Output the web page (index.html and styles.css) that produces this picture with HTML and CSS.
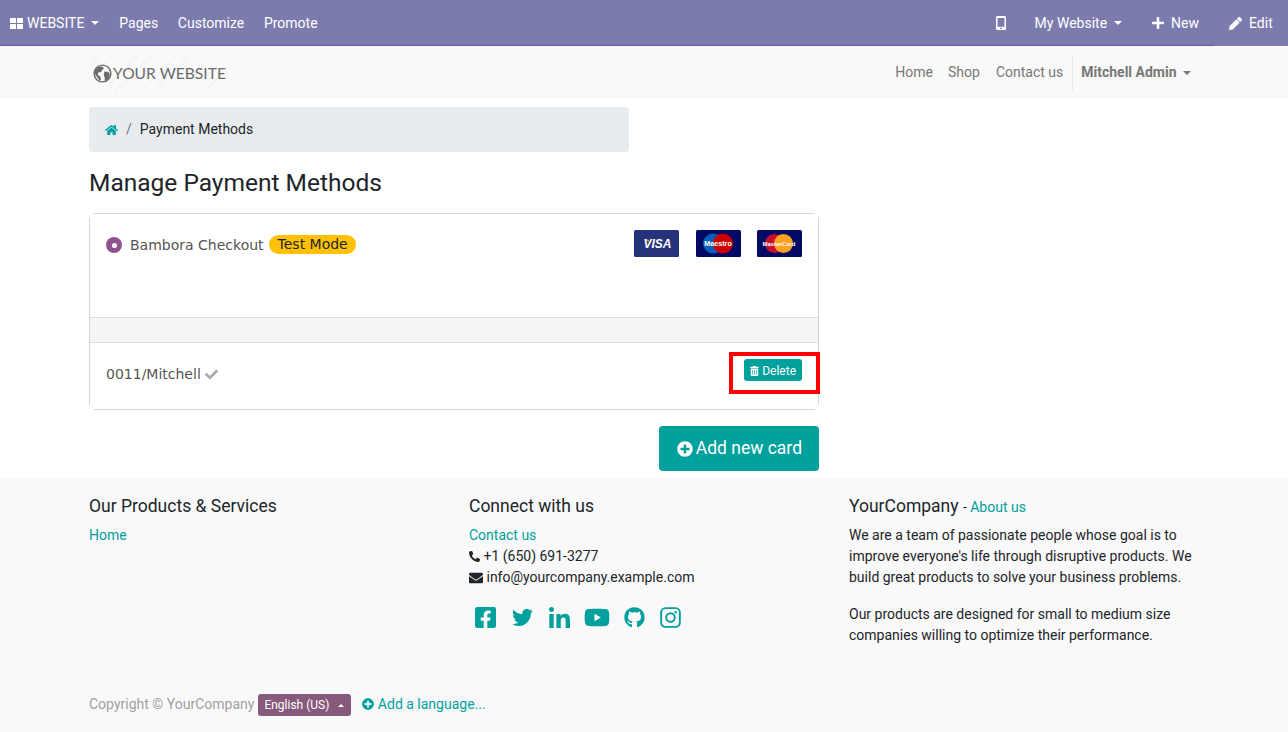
FILE: index.html
```html
<!DOCTYPE html>
<html lang="en">

<head>
    <meta charset="UTF-8">
    <meta name="viewport" content="width=device-width, initial-scale=1.0">
    <title>Manage Payment Methods</title>
    <link rel="stylesheet" href="styles.css">
</head>

<body>
    <nav class="adminbar">
        <div class="adminbar-left">
            <a class="admin-link admin-brand">
                <svg class="ico ico-th" viewBox="0 0 13 11"><rect x="0" y="0" width="6" height="5" rx="0.6"/><rect x="7" y="0" width="6" height="5" rx="0.6"/><rect x="0" y="6" width="6" height="5" rx="0.6"/><rect x="7" y="6" width="6" height="5" rx="0.6"/></svg>
                <span>WEBSITE</span><span class="caret"></span>
            </a>
            <a class="admin-link">Pages</a>
            <a class="admin-link admin-tight">Customize</a>
            <a class="admin-link admin-tight">Promote</a>
        </div>
        <div class="adminbar-right">
            <a class="admin-link admin-mobile">
                <svg class="ico ico-mobile" viewBox="0 0 10 14"><path fill-rule="evenodd" d="M1.6 0h6.8C9.3 0 10 .7 10 1.6v10.8c0 .9-.7 1.6-1.6 1.6H1.6C.7 14 0 13.300 0 12.400V1.600C0 .7.7 0 1.600 0zM1.500 2v8.800h7V2zM5 11.400a.9.9 0 1 0 0 1.800.9.9 0 0 0 0-1.800z"/></svg>
            </a>
            <a class="admin-link admin-site"><span>My Website</span><span class="caret"></span></a>
            <a class="admin-link admin-new">
                <svg class="ico ico-plus" viewBox="0 0 448 512"><path d="M416 208H272V64c0-17.670-14.330-32-32-32h-32c-17.670 0-32 14.330-32 32v144H32c-17.670 0-32 14.330-32 32v32c0 17.670 14.330 32 32 32h144v144c0 17.670 14.330 32 32 32h32c17.670 0 32-14.330 32-32V304h144c17.670 0 32-14.330 32-32v-32c0-17.670-14.330-32-32-32z"/></svg>
                <span>New</span>
            </a>
            <a class="admin-link admin-edit">
                <svg class="ico ico-pencil" viewBox="0 0 512 512"><path d="M497.900 142.100l-46.100 46.100c-4.700 4.700-12.300 4.700-17 0l-111-111c-4.700-4.700-4.700-12.300 0-17l46.100-46.100c18.700-18.700 49.100-18.700 67.900 0l60.100 60.100c18.800 18.700 18.800 49.100 0 67.900zM284.200 99.800L21.600 362.400.4 483.900c-2.900 16.400 11.400 30.600 27.800 27.800l121.500-21.300 262.600-262.600c4.700-4.700 4.700-12.300 0-17l-111-111c-4.800-4.700-12.400-4.700-17.100 0z"/></svg>
                <span>Edit</span>
            </a>
        </div>
    </nav>

    <header class="sitebar">
        <div class="container sitebar-inner">
            <a class="logo">
                <svg class="logo-globe" viewBox="0 0 20 20">
                    <circle cx="10" cy="10" r="8.800" fill="none" stroke="#6b6b6b" stroke-width="1.500"/>
                    <path fill="#6b6b6b" d="M6 2.500l4 .5 1.500 1.500-2 2-1 2-3 .5-.5 2.500 2.500 1.500 1 3-1.500 1.500-2-3-2.500-3-1-3 2-3.500zM12 8l4 .5 1.800 2-1 4-3 3.500-1.500-.5v-3.500l-1-2.500z"/>
                </svg>
                <span class="logo-text">YOUR WEBSITE</span>
            </a>
            <ul class="sitenav">
                <li class="sitenav-home"><a>Home</a></li>
                <li><a>Shop</a></li>
                <li class="sitenav-contact"><a>Contact us</a></li>
                <li class="sitenav-user"><a>Mitchell Admin <span class="caret"></span></a></li>
            </ul>
        </div>
    </header>

    <main class="container content">
        <div class="breadcrumb">
            <svg class="ico ico-home" viewBox="0 0 576 512"><path d="M280.370 148.260L96 300.110V464a16 16 0 0 0 16 16l112.060-.29a16 16 0 0 0 15.920-16V368a16 16 0 0 1 16-16h64a16 16 0 0 1 16 16v95.640a16 16 0 0 0 16 16.050L464 480a16 16 0 0 0 16-16V300L295.670 148.260a12.190 12.190 0 0 0-15.300 0zM571.600 251.470L488 182.560V44.050a12 12 0 0 0-12-12h-56a12 12 0 0 0-12 12v72.610L318.470 43a48 48 0 0 0-61 0L4.340 251.470a12 12 0 0 0-1.600 16.900l25.500 31A12 12 0 0 0 45.150 301l235.220-193.740a12.190 12.190 0 0 1 15.300 0L530.900 301a12 12 0 0 0 16.900-1.600l25.500-31a12 12 0 0 0-1.700-16.930z"/></svg>
            <span class="crumb-sep">/</span>
            <span>Payment Methods</span>
        </div>

        <h3 class="page-title">Manage Payment Methods</h3>

        <div class="pay-card">
            <div class="pay-row">
                <div class="pay-label">
                    <span class="radio"></span>
                    <span class="pay-name">Bambora Checkout</span>
                    <span class="badge-test">Test Mode</span>
                </div>
                <div class="pay-logos">
                    <svg class="cc cc-first" viewBox="0 0 45 27">
                        <rect width="45" height="27" rx="1.500" fill="#26337a"/>
                        <path d="M9.500 9.500c2.500.3 5 1.500 6.500 4-.800-2.500-1.200-3.600-2-4z" fill="#f4a428"/>
                        <text x="23.500" y="18" class="cc-visa">VISA</text>
                    </svg>
                    <svg class="cc" viewBox="0 0 45 27">
                        <rect width="45" height="27" rx="1.500" fill="#000a64"/>
                        <circle cx="17" cy="13.500" r="10" fill="#0a5fb8"/>
                        <circle cx="27" cy="13.500" r="10" fill="#cc0000"/>
                        <text x="22" y="15.800" class="cc-name">Maestro</text>
                    </svg>
                    <svg class="cc" viewBox="0 0 45 27">
                        <rect width="45" height="27" rx="1.500" fill="#000a64"/>
                        <circle cx="17.500" cy="13.500" r="9.500" fill="#c8102e"/>
                        <circle cx="26.500" cy="13.500" r="9.500" fill="#ffa020"/>
                        <text x="22" y="15.800" class="cc-name cc-master">MasterCard</text>
                    </svg>
                </div>
            </div>
            <div class="pay-spacer"></div>
            <div class="pay-token">
                <div class="token-name">
                    0011/Mitchell
                    <svg class="ico ico-check" viewBox="0 0 512 512"><path d="M173.898 439.404l-166.400-166.400c-9.997-9.997-9.997-26.206 0-36.204l36.203-36.204c9.997-9.998 26.207-9.998 36.204 0L192 312.690 432.095 72.596c9.997-9.997 26.207-9.997 36.204 0l36.203 36.204c9.997 9.997 9.997 26.206 0 36.204l-294.400 294.401c-9.998 9.997-26.207 9.997-36.204-.001z"/></svg>
                </div>
                <a class="btn-delete">
                    <svg class="ico ico-trash" viewBox="0 0 448 512"><path d="M32 464a48 48 0 0 0 48 48h288a48 48 0 0 0 48-48V128H32zm272-256a16 16 0 0 1 32 0v224a16 16 0 0 1-32 0zm-96 0a16 16 0 0 1 32 0v224a16 16 0 0 1-32 0zm-96 0a16 16 0 0 1 32 0v224a16 16 0 0 1-32 0zM432 32H312l-9.400-18.700A24 24 0 0 0 281.100 0H166.800a23.720 23.720 0 0 0-21.400 13.300L136 32H16A16 16 0 0 0 0 48v32a16 16 0 0 0 16 16h416a16 16 0 0 0 16-16V48a16 16 0 0 0-16-16z"/></svg>
                    <span>Delete</span>
                </a>
                <span class="highlight-box"></span>
            </div>
        </div>

        <div class="add-wrap">
            <a class="btn-add">
                <svg class="ico ico-addcircle" viewBox="0 0 512 512"><path d="M256 8C119 8 8 119 8 256s111 248 248 248 248-111 248-248S393 8 256 8zm144 276c0 6.600-5.400 12-12 12h-92v92c0 6.600-5.400 12-12 12h-56c-6.600 0-12-5.400-12-12v-92h-92c-6.600 0-12-5.400-12-12v-56c0-6.600 5.400-12 12-12h92v-92c0-6.600 5.400-12 12-12h56c6.600 0 12 5.400 12 12v92h92c6.600 0 12 5.400 12 12v56z"/></svg>
                <span>Add new card</span>
            </a>
        </div>
    </main>

    <footer class="footer">
        <div class="container">
            <div class="footer-cols">
                <div class="footer-col">
                    <h5 class="footer-title">Our Products &amp; Services</h5>
                    <a class="link">Home</a>
                </div>
                <div class="footer-col">
                    <h5 class="footer-title">Connect with us</h5>
                    <div class="footer-line"><a class="link">Contact us</a></div>
                    <div class="footer-line">
                        <svg class="ico ico-phone" viewBox="0 0 512 512"><path d="M493.400 24.600l-104-24c-11.300-2.600-22.900 3.300-27.500 13.900l-48 112c-4.200 9.800-1.400 21.300 6.900 28l60.600 49.600c-36 76.700-98.900 140.500-177.200 177.200l-49.600-60.600c-6.800-8.300-18.200-11.100-28-6.900l-112 48C3.900 366.500-2 378.100.6 389.400l24 104C27.100 504.200 36.700 512 48 512c256.100 0 464-207.500 464-464 0-11.200-7.700-20.900-18.600-23.400z"/></svg>
                        +1 (650) 691-3277
                    </div>
                    <div class="footer-line">
                        <svg class="ico ico-mail" viewBox="0 0 512 512"><path d="M502.300 190.800c3.900-3.100 9.700-.2 9.700 4.700V400c0 26.500-21.500 48-48 48H48c-26.500 0-48-21.500-48-48V195.600c0-5 5.700-7.800 9.700-4.700 22.400 17.400 52.100 39.500 154.100 113.600 21.100 15.400 56.700 47.800 92.200 47.600 35.700.3 72-32.800 92.300-47.600 102-74.100 131.600-96.300 154-113.700zM256 320c23.200.4 56.600-29.200 73.400-41.400 132.700-96.300 142.800-104.700 173.400-128.700 5.800-4.500 9.200-11.500 9.200-18.900v-19c0-26.500-21.500-48-48-48H48C21.500 64 0 85.500 0 112v19c0 7.400 3.400 14.300 9.200 18.900 30.600 23.900 40.700 32.400 173.400 128.700 16.800 12.200 50.200 41.800 73.400 41.400z"/></svg>
                        info@yourcompany.example.com
                    </div>
                    <div class="social">
                        <svg class="social-ico" viewBox="0 32 448 448"><path d="M400 32H48A48 48 0 0 0 0 80v352a48 48 0 0 0 48 48h137.250V327.690h-63V256h63v-54.640c0-62.150 37-96.480 93.670-96.480 27.140 0 55.520 4.840 55.520 4.840v61h-31.270c-30.810 0-40.420 19.120-40.420 38.730V256h68.780l-11 71.690h-57.780V480H400a48 48 0 0 0 48-48V80a48 48 0 0 0-48-48z"/></svg>
                        <svg class="social-ico" viewBox="0 0 512 512"><path d="M459.370 151.716c.325 4.548.325 9.097.325 13.645 0 138.720-105.583 298.558-298.558 298.558-59.452 0-114.680-17.219-161.137-47.106 8.447.974 16.568 1.299 25.340 1.299 49.055 0 94.213-16.568 130.274-44.832-46.132-.975-84.792-31.188-98.112-72.772 6.498.974 12.995 1.624 19.818 1.624 9.421 0 18.843-1.300 27.614-3.573-48.081-9.747-84.143-51.980-84.143-102.985v-1.299c13.969 7.797 30.214 12.670 47.431 13.319-28.264-18.843-46.781-51.005-46.781-87.391 0-19.492 5.197-37.360 14.294-52.954 51.655 63.675 129.300 105.258 216.365 109.807-1.624-7.797-2.599-15.918-2.599-24.040 0-57.828 46.782-104.934 104.934-104.934 30.213 0 57.502 12.670 76.670 33.137 23.715-4.548 46.456-13.320 66.599-25.340-7.798 24.366-24.366 44.833-46.132 57.827 21.117-2.273 41.584-8.122 60.426-16.243-14.292 20.791-32.161 39.308-52.628 54.253z"/></svg>
                        <svg class="social-ico" viewBox="0 32 448 448"><path d="M100.280 480H7.400V180.900h92.880zM53.790 140.100C24.090 140.100 0 115.500 0 85.800a53.790 53.790 0 0 1 107.580 0c0 29.700-24.100 54.300-53.790 54.300zM447.900 480h-92.680V334.400c0-34.700-.7-79.200-48.290-79.200-48.290 0-55.690 37.700-55.690 76.700V480h-92.780V180.900h89.080v40.800h1.300c12.400-23.500 42.690-48.300 87.880-48.300 94 0 111.280 61.900 111.280 142.300V480z"/></svg>
                        <svg class="social-ico social-yt" viewBox="0 32 576 448"><path d="M549.655 124.083c-6.281-23.650-24.787-42.276-48.284-48.597C458.781 64 288 64 288 64S117.220 64 74.629 75.486c-23.497 6.322-42.003 24.947-48.284 48.597-11.412 42.867-11.412 132.305-11.412 132.305s0 89.438 11.412 132.305c6.281 23.650 24.787 41.500 48.284 47.821C117.220 448 288 448 288 448s170.780 0 213.371-11.486c23.497-6.321 42.003-24.171 48.284-47.821 11.412-42.867 11.412-132.305 11.412-132.305s0-89.438-11.412-132.305zm-317.510 213.508V175.185l142.739 81.205-142.739 81.201z"/></svg>
                        <svg class="social-ico social-gh" viewBox="0 0 496 512"><path d="M244.800 8C106.100 8 0 113.300 0 252c0 110.900 69.800 205.800 169.500 239.200 12.800 2.300 17.300-5.600 17.300-12.100 0-6.200-.3-40.400-.3-61.400 0 0-70 15-84.700-29.800 0 0-11.400-29.100-27.800-36.600 0 0-22.900-15.700 1.600-15.400 0 0 24.900 2 38.600 25.800 21.900 38.600 58.600 27.500 72.900 20.900 2.300-16 8.800-27.100 16-33.700-55.900-6.200-112.300-14.300-112.300-110.500 0-27.500 7.600-41.300 23.600-58.900-2.600-6.500-11.100-33.300 2.600-67.900 20.900-6.500 69 27 69 27 20-5.600 41.500-8.500 62.800-8.500s42.800 2.900 62.800 8.500c0 0 48.100-33.600 69-27 13.700 34.700 5.200 61.400 2.600 67.900 16 17.700 25.800 31.500 25.800 58.900 0 96.500-58.900 104.200-114.800 110.500 9.200 7.900 17 22.900 17 46.400 0 33.700-.3 75.400-.3 83.600 0 6.500 4.600 14.400 17.300 12.100C428.200 457.800 496 362.900 496 252 496 113.300 383.500 8 244.800 8z"/></svg>
                        <svg class="social-ico" viewBox="0 0 22 22"><rect x="1.200" y="1.200" width="19.600" height="19.600" rx="4.500" fill="none" stroke="#00a09d" stroke-width="2"/><circle cx="11" cy="11" r="4.500" fill="none" stroke="#00a09d" stroke-width="2"/><circle cx="16.500" cy="5.500" r="1.300"/></svg>
                    </div>
                </div>
                <div class="footer-col">
                    <h5 class="footer-title">YourCompany <small class="title-small">- <a class="link">About us</a></small></h5>
                    <p class="about">We are a team of passionate people whose goal is to improve everyone's life through disruptive products. We build great products to solve your business problems.</p>
                    <p class="about">Our products are designed for small to medium size companies willing to optimize their performance.</p>
                </div>
            </div>
            <div class="copyright">
                <span class="copy-text">Copyright &copy; YourCompany</span>
                <a class="lang-btn"><span>English (US)</span><span class="caret caret-up"></span></a>
                <a class="link add-lang">
                    <svg class="ico ico-lang" viewBox="0 0 512 512"><path d="M256 8C119 8 8 119 8 256s111 248 248 248 248-111 248-248S393 8 256 8zm144 276c0 6.600-5.400 12-12 12h-92v92c0 6.600-5.400 12-12 12h-56c-6.600 0-12-5.400-12-12v-92h-92c-6.600 0-12-5.400-12-12v-56c0-6.600 5.400-12 12-12h92v-92c0-6.600 5.400-12 12-12h56c6.600 0 12 5.400 12 12v92h92c6.600 0 12 5.400 12 12v56z"/></svg>
                    Add a language...
                </a>
            </div>
        </div>
    </footer>
</body>

</html>
```

FILE: styles.css
```css
* {
    box-sizing: border-box;
}

body {
    margin: 0;
    font-family: Roboto, "Noto Sans", sans-serif;
    font-size: 14px;
    line-height: 21px;
    color: #212529;
    background-color: #fff;
}

.container {
    width: 1140px;
    margin: 0 auto;
    padding: 0 15px;
}

.ico {
    fill: currentColor;
    display: inline-block;
}

.caret {
    display: inline-block;
    width: 0;
    height: 0;
    margin-left: 3px;
    vertical-align: 2px;
    border-top: 4px solid currentColor;
    border-left: 4px solid transparent;
    border-right: 4px solid transparent;
}

.caret-up {
    border-top: 0;
    border-bottom: 3px solid currentColor;
    border-left-width: 3px;
    border-right-width: 3px;
    margin-right: 1px;
}

.link {
    color: #00a09d;
}

/* admin bar */
.adminbar {
    height: 46px;
    display: flex;
    justify-content: space-between;
    background-color: #7c7bad;
    border-bottom: 1px solid #5f5e97;
    color: #fff;
}

.adminbar-left,
.adminbar-right {
    display: flex;
    align-items: stretch;
}

.admin-link {
    display: flex;
    align-items: center;
    padding: 1px 10px 0;
    color: #fff;
    white-space: nowrap;
}

.admin-tight {
    margin-left: -0.4px;
}

.ico-th {
    width: 13px;
    height: 11px;
    margin-right: 4px;
}

.admin-brand .caret,
.admin-site .caret {
    margin-left: 7px;
}

.admin-mobile {
    padding: 1px 14px 0;
}

.ico-mobile {
    width: 10px;
    height: 14px;
}

.admin-site,
.admin-new {
    padding: 1px 15px 0;
}

.ico-plus {
    width: 12px;
    height: 14px;
    margin-right: 7px;
}

.ico-pencil {
    width: 13px;
    height: 13px;
    margin-right: 7px;
}

.admin-edit {
    width: 74px;
    padding: 1px 0 0 15px;
    height: 46px;
    background-color: #7c7bad;
}

/* site navbar */
.sitebar {
    height: 53px;
    background-color: #f9f9f9;
}

.sitebar-inner {
    display: flex;
    justify-content: space-between;
    align-items: center;
    height: 53px;
}

.logo {
    display: flex;
    align-items: center;
    width: 139px;
    height: 39px;
    padding: 2px 0 0 4px;
    color: #6b6b6b;
    background-image: repeating-linear-gradient(135deg, #f2f2f2 0, #f2f2f2 1px, transparent 1px, transparent 9px);
}

.logo-globe {
    width: 19px;
    height: 19px;
    flex-shrink: 0;
}

.logo-text {
    font-family: Lato, sans-serif;
    font-size: 15.6px;
    margin-left: 1px;
    white-space: nowrap;
}

.sitenav {
    list-style: none;
    display: flex;
    margin: 0;
    padding: 0;
    color: #777;
}

.sitenav li {
    padding: 0 8px;
    height: 37px;
    line-height: 37px;
    white-space: nowrap;
}

.sitenav li.sitenav-home {
    padding-right: 7px;
}

.sitenav li.sitenav-contact {
    padding-right: 9px;
}

.sitenav-user {
    border-left: 1px solid #e9ecef;
    font-weight: 700;
}

/* main */
.content {
    padding-top: 8px;
}

.breadcrumb {
    display: flex;
    align-items: center;
    width: 540px;
    height: 45px;
    padding: 0 16px;
    background-color: #e9ecef;
    border-radius: 4px;
}

.ico-home {
    width: 13px;
    height: 12px;
    color: #00a09d;
}

.crumb-sep {
    color: #6c757d;
    margin: 0 8px;
}

.page-title {
    margin: 16px 0 16px;
    font-size: 24.5px;
    line-height: 29px;
    font-weight: 400;
}

/* corners of the card border fade out, so the straight edges are drawn as backgrounds */
.pay-card {
    width: 730px;
    border: 1px solid rgba(0, 0, 0, 0.03);
    border-radius: 5px;
    background-origin: border-box;
    background-repeat: no-repeat;
    background-image: linear-gradient(#ddd, #ddd), linear-gradient(#ddd, #ddd), linear-gradient(#ddd, #ddd), linear-gradient(#ddd, #ddd);
    background-position: top center, bottom center, left center, right center;
    background-size: calc(100% - 10px) 1px, calc(100% - 10px) 1px, 1px calc(100% - 10px), 1px calc(100% - 10px);
    font-family: "DejaVu Sans", sans-serif;
    font-size: 14px;
    color: #555;
}

.pay-row {
    height: 104px;
    padding: 16px 16px 0;
    display: flex;
    justify-content: space-between;
    border-bottom: 1px solid #ddd;
}

.pay-label {
    display: flex;
    align-items: center;
    height: 30px;
}

.radio {
    width: 16px;
    height: 16px;
    border-radius: 50%;
    background-color: #8f5290;
    margin-right: 8px;
    display: flex;
    align-items: center;
    justify-content: center;
}

.radio::after {
    content: "";
    width: 5px;
    height: 5px;
    border-radius: 50%;
    background-color: #fff;
}

.badge-test {
    margin: -1px 0 0 5px;
    height: 19px;
    line-height: 19px;
    padding: 0 8px 0 9px;
    border-radius: 10px;
    background-color: #ffc107;
    color: #212529;
}

.pay-logos {
    display: flex;
    gap: 16px;
}

.cc {
    width: 45px;
    height: 27px;
}

.cc-first {
    margin-right: 1px;
}

.cc-visa {
    font-family: "Liberation Sans", sans-serif;
    font-size: 12px;
    font-weight: 700;
    font-style: italic;
    fill: #fff;
    text-anchor: middle;
}

.cc-name {
    font-family: "Liberation Sans", sans-serif;
    font-size: 7.2px;
    font-weight: 700;
    fill: #fff;
    text-anchor: middle;
}

.cc-master {
    font-size: 6px;
}

.pay-spacer {
    height: 25px;
    background-color: #f5f5f5;
    border-bottom: 1px solid #ddd;
}

.pay-token {
    position: relative;
    height: 66px;
    padding: 0 16px;
    display: flex;
    justify-content: space-between;
    align-items: center;
}

.token-name {
    margin-top: -4px;
}

.ico-check {
    width: 13px;
    height: 13px;
    color: #aaa;
    vertical-align: -2px;
}

.btn-delete {
    display: flex;
    align-items: center;
    font-family: Roboto, sans-serif;
    font-size: 12px;
    height: 22px;
    padding: 2px 6px 0;
    margin-top: -12px;
    background-color: #00a09d;
    border-radius: 3px;
    color: #fff;
}

.ico-trash {
    width: 9px;
    height: 10px;
    margin-right: 3px;
}

.highlight-box {
    position: absolute;
    top: 9px;
    right: -2px;
    width: 91px;
    height: 42px;
    border: 4px solid #f00;
}

.add-wrap {
    width: 730px;
    display: flex;
    justify-content: flex-end;
    padding: 16px 0 8px;
}

.btn-add {
    display: flex;
    align-items: center;
    height: 45px;
    padding: 0 17px 0 18px;
    font-size: 17.5px;
    background-color: #00a09d;
    color: #fff;
    border-radius: 4px;
}

.ico-addcircle {
    width: 16px;
    height: 16px;
    margin-right: 3px;
}

/* footer */
.footer {
    height: 253px;
    background-color: #f9f9f9;
}

.footer-cols {
    display: grid;
    grid-template-columns: 380px 380px 350px;
    height: 192px;
    padding-top: 17px;
}

.footer-title {
    margin: 0 0 8px;
    font-size: 17.5px;
    line-height: 21px;
    font-weight: 400;
}

.title-small {
    font-size: 14px;
    font-weight: 400;
    line-height: 1;
}

.footer-line {
    height: 21px;
}

.ico-phone {
    width: 11px;
    height: 11px;
    transform: scaleX(-1);
    vertical-align: -1px;
}

.ico-mail {
    width: 14px;
    height: 14px;
    vertical-align: -3px;
}

.social {
    display: flex;
    align-items: center;
    gap: 16px;
    padding: 19px 0 0 6px;
}

.social-ico {
    width: 21px;
    height: 21px;
    fill: #00a09d;
}

.social-yt {
    width: 26px;
    margin: 0 -2px;
}

.social-gh {
    margin-right: -1px;
}

.about {
    margin: 0 0 16px;
}

.copyright {
    display: flex;
    align-items: center;
    height: 22px;
    margin-top: 23px;
}

.copy-text {
    color: #a0a0a0;
    margin-bottom: 2px;
}

.lang-btn {
    display: flex;
    align-items: center;
    justify-content: space-between;
    width: 93px;
    height: 22px;
    margin-left: 4px;
    padding: 0 6px;
    font-size: 12px;
    background-color: #875a7b;
    color: #fff;
    border-radius: 3px;
}

.add-lang {
    margin: 0 0 2px 11px;
}

.ico-lang {
    width: 12px;
    height: 12px;
    vertical-align: -1px;
}
```
